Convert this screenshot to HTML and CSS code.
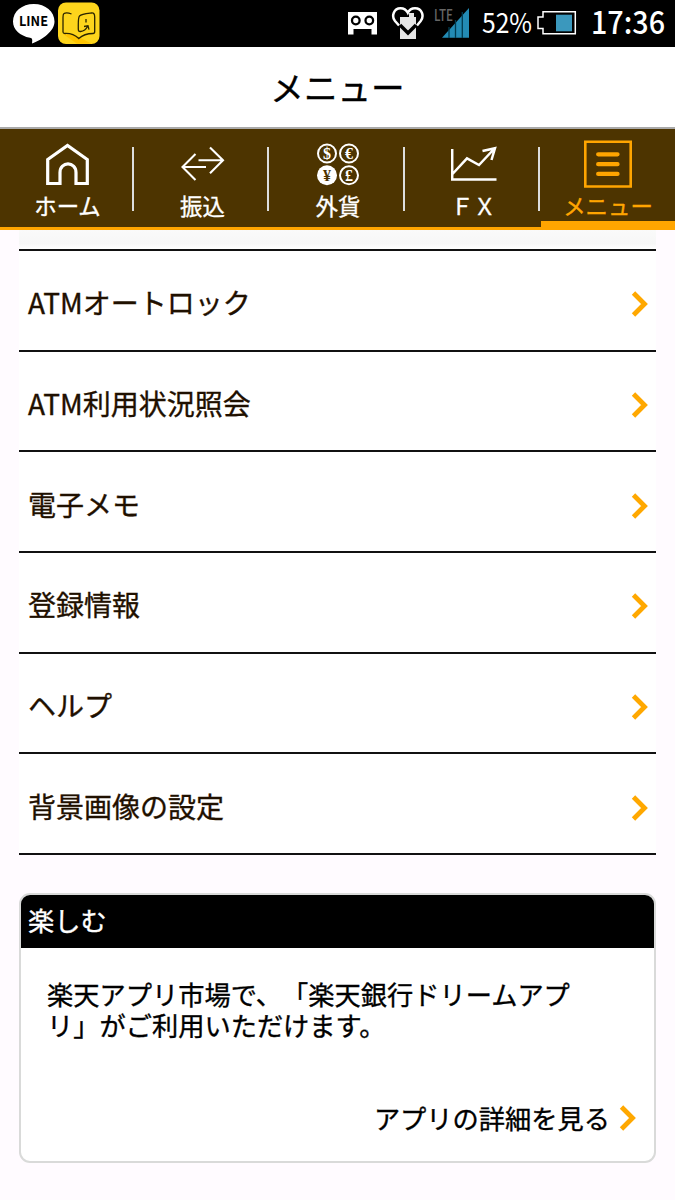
FILE: index.html
```html
<!DOCTYPE html>
<html lang="ja">
<head>
<meta charset="utf-8">
<title>メニュー</title>
<link rel="stylesheet" href="styles.css">
</head>
<body>
<svg class="defs" width="0" height="0" aria-hidden="true">
  <symbol id="chevron" viewBox="0 0 18 28"><path d="M2.5 3 13.5 14 2.5 25" fill="none" stroke="#ffa800" stroke-width="4.8"/></symbol>
</svg>
<header class="status">
  <svg class="status-apps" width="110" height="47" viewBox="0 0 110 47">
    <path d="M33.8 4C22 4 13 11.500 13 21.500c0 8 7 14.500 17 16.300 2.200.4 2.700 1.500 2 5.700C43 39.500 54.500 31 54.500 21.500 54.500 11.500 45.500 4 33.800 4Z" fill="#fff"/>
    <text x="19" y="25.600" class="line-text" textLength="29" lengthAdjust="spacingAndGlyphs">LINE</text>
    <rect x="58" y="2.500" width="41.500" height="41.500" rx="8" fill="#fdd51c"/>
    <path d="M63 34l14 9.800H91.500L79 37l-4-2Z" fill="#ffc400"/>
    <path d="M71.500 14c-3-1.300-6-1.500-7.500-.5-1 .7-1 2-1 4V32c0 1 .5 1.500 2 1.500 6-.3 10 1.500 13.800 5C82 35.500 87 33.500 93 33.500c1.200 0 1.700-.7 1.700-2V17c0-3-1-4.300-3.200-4-4 .5-10 1-12 3-1.500 1.500-1.200 4-1.200 13 0 2 .5 2.600 2.200 2.500 4-.5 5.500-2 7-5M84 26.500l4-.8 1 4M86 19v3.500" fill="none" stroke="#2b2500" stroke-width="1.300"/>
  </svg>
  <div class="status-info">
    <svg width="30" height="47" viewBox="348 0 30 47">
      <path d="M348 12h29v22.500h-5.500V29h-18v5.500H348Z" fill="#fff"/>
      <circle cx="355.800" cy="20.500" r="3.800" fill="#fff" stroke="#000" stroke-width="2.300"/><circle cx="369.300" cy="20.500" r="3.800" fill="#fff" stroke="#000" stroke-width="2.300"/>
    </svg>
    <svg class="heart" width="34" height="47" viewBox="391 0 34 47">
      <path d="M400 17h9v-4h5v4h2v22h-16Z" fill="#e6e6e6"/>
      <path d="M400 25l8 8 8-8" fill="none" stroke="#000" stroke-width="3.500"/>
      <path d="M399 25.500l-4-4.500c-4-5-1-12.800 5.500-12.800 4 0 6 2 7.300 4.500 1.200-2.500 3.700-4.500 7.200-4.500 7 0 9.500 7.800 5.700 12.800l-3.700 4.500" fill="none" stroke="#fff" stroke-width="2.500"/>
    </svg>
    <svg class="signal" width="36" height="47" viewBox="434 0 36 47">
      <text x="434" y="21" class="lte" textLength="19" lengthAdjust="spacingAndGlyphs">LTE</text>
      <path d="M442 37.800 469 8v29.800Z" fill="#238bb5"/>
      <path d="M449 27v11M455.500 20v18M462.300 12v26" stroke="#003b50" stroke-width="1.300"/>
    </svg>
    <svg class="percent" width="50" height="47" viewBox="0 0 50 47"><text x="0" y="33" class="percent-text" textLength="50" lengthAdjust="spacingAndGlyphs">52%</text></svg>
    <svg class="battery" width="40" height="47" viewBox="537 0 40 47">
      <path d="M543 11.800h32.300v22H543v-5.300h-5V17h5Z" fill="none" stroke="#fff" stroke-width="1.500"/>
      <path d="M556 14.700h16v16.600h-16Z" fill="#3b98bd"/>
    </svg>
    <svg class="clock" width="74" height="47" viewBox="0 0 74 47"><text x="0" y="34" class="clock-text" textLength="74" lengthAdjust="spacingAndGlyphs">17:36</text></svg>
  </div>
</header>
<h1 class="title">メニュー</h1>
<nav class="tabs">
  <a class="tab">
    <svg width="46" height="50" viewBox="44 140 46 50"><path d="M46.700 183.500V159.500L66.500 145.500 86.300 159.500v24H75v-11c0-11.500-16-11.500-16 0v11Z" fill="none" stroke="#fff" stroke-width="3.200"/></svg>
    <span>ホーム</span>
  </a>
  <a class="tab">
    <svg width="46" height="50" viewBox="179 140 46 50"><path d="M194.500 154 181.500 167l13 13M181.500 167H205M209 147.500 222 160.300l-13 13M222 160.300H197.500" fill="none" stroke="#fff" stroke-width="2.100"/></svg>
    <span>振込</span>
  </a>
  <a class="tab">
    <svg class="coins" width="46" height="50" viewBox="313.500 140 46 50">
      <g fill="none" stroke="#fff" stroke-width="2"><circle cx="325.500" cy="153.500" r="9"/><circle cx="347.500" cy="153.500" r="9"/><circle cx="347.500" cy="175.300" r="9"/></g>
      <circle cx="325.500" cy="175.300" r="10" fill="#fff"/>
      <text x="325.500" y="159.300">$</text><text x="347.500" y="159.300">€</text><text x="347.500" y="181">£</text><text x="325.500" y="181" class="yen">¥</text>
    </svg>
    <span>外貨</span>
  </a>
  <a class="tab">
    <svg width="46" height="50" viewBox="449.500 140 46 50"><path d="M450.700 149v30.500H495M451 174l14.500-15.700L477.500 165 493 148.500M481 151l12.500-2.800L490 160" fill="none" stroke="#fff" stroke-width="2.500"/></svg>
    <span>ＦＸ</span>
  </a>
  <a class="tab active">
    <svg width="48" height="50" viewBox="584 140 48 50"><path d="M585.300 141.800h45.400V186.500H585.300Z" fill="none" stroke="#ffa500" stroke-width="2.600"/><path d="M598.200 154.300h19.300M598.200 164.200h19.300M598.200 173.900h19.300" stroke="#ffa500" stroke-width="4.300" stroke-linecap="round"/></svg>
    <span>メニュー</span>
  </a>
</nav>
<main class="content">
  <div class="previous-row"></div>
  <ul class="menu">
    <li><span>ATMオートロック</span><svg class="chev"><use href="#chevron"/></svg></li>
    <li><span>ATM利用状況照会</span><svg class="chev"><use href="#chevron"/></svg></li>
    <li><span>電子メモ</span><svg class="chev"><use href="#chevron"/></svg></li>
    <li><span>登録情報</span><svg class="chev"><use href="#chevron"/></svg></li>
    <li><span>ヘルプ</span><svg class="chev"><use href="#chevron"/></svg></li>
    <li><span>背景画像の設定</span><svg class="chev"><use href="#chevron"/></svg></li>
  </ul>
  <section class="card">
    <h2>楽しむ</h2>
    <p>楽天アプリ市場で、「楽天銀行ドリームアプ<br>リ」がご利用いただけます。</p>
    <a class="more"><span>アプリの詳細を見る</span><svg class="chev"><use href="#chevron"/></svg></a>
  </section>
</main>
</body>
</html>
```
FILE: styles.css
```css
* { box-sizing: border-box; }
body {
  margin: 0;
  height: 1200px;
  overflow: hidden;
  background: #fffbff;
  color: #000;
  font-family: "Noto Sans CJK JP", sans-serif;
  font-feature-settings: "palt" 0;
  text-spacing-trim: space-all;
  -webkit-text-stroke: 0.35px currentColor;
}
svg { display: block; flex: none; }
.defs { position: absolute; }
.status {
  display: flex;
  justify-content: space-between;
  height: 47px;
  padding-right: 10px;
  background: #000;
  color: #fff;
}
.status text { fill: #fff; }
.status-info { display: flex; }
.line-text { font: bold 13.500px "Noto Sans CJK JP", sans-serif; }
.status .line-text { fill: #000; }
.heart { margin-left: 13px; }
.signal { margin-left: 9px; }
.lte { font: 500 16px "Noto Sans CJK JP", sans-serif; }
.status .lte { fill: #666; }
.percent { margin-left: 12px; }
.percent-text { font: 27.500px "Noto Sans CJK JP", sans-serif; }
.battery { margin-left: 5px; }
.clock { margin-left: 14px; }
.clock-text { font: 500 31px "Noto Sans CJK JP", sans-serif; }
.title {
  height: 82px;
  margin: 0;
  border-bottom: 2px solid #a9a9a9;
  background: #fff;
  font-size: 33.600px;
  font-weight: 400;
  line-height: 80px;
  text-align: center;
}
.tabs {
  display: grid;
  grid-template-columns: 135px 135px 136px 135px 134px;
  height: 101px;
  background: #4d3400;
  color: #fff;
}
.tab {
  display: flex;
  flex-direction: column;
  align-items: center;
  padding-top: 11px;
  border-bottom: 3px solid #ffa500;
  font-size: 22.400px;
  line-height: 30px;
  background: linear-gradient(#ddd, #ddd) right 1px top 18px / 2px 64px no-repeat;
}
.tab.active {
  border-bottom-width: 9px;
  background: none;
  color: #ffa500;
}
.coins text {
  fill: #fff;
  font: bold 16px "Liberation Serif", serif;
  text-anchor: middle;
}
.coins .yen { fill: #4d3400; }
.content { padding: 0 19px; }
.previous-row {
  width: 637px;
  height: 19px;
  background: linear-gradient(#fafafa, #f7f7f7 70%, #fff);
}
.menu {
  width: 637px;
  margin: 0;
  padding: 0;
  border-top: 2px solid #111;
  background: #fff;
  color: #1f1000;
  list-style: none;
}
.menu li {
  display: flex;
  align-items: center;
  justify-content: space-between;
  height: 100.700px;
  padding: 8px 7px 0 9px;
  border-bottom: 2px solid #111;
  font-size: 28px;
}
.menu li span { padding-bottom: 4px; }
.chev { width: 18px; height: 28px; }
.card {
  width: 637px;
  height: 270px;
  margin-top: 38px;
  border: 2px solid #d9dad9;
  border-radius: 11px;
  overflow: hidden;
  background: #fff;
  font-size: 26.240px;
}
.card h2 {
  height: 53px;
  margin: 0 0 0 -2px;
  padding-left: 9px;
  background: #000;
  color: #fff;
  font-size: inherit;
  font-weight: 400;
  line-height: 50px;
}
.card p {
  height: 124px;
  margin: 0;
  padding: 31px 0 0 26px;
  line-height: 31px;
  white-space: nowrap;
}
.more {
  display: flex;
  align-items: center;
  justify-content: flex-end;
  gap: 9px;
  height: 92px;
  padding: 0 17px 0 0;
}
.more span { padding-bottom: 1px; }
```
